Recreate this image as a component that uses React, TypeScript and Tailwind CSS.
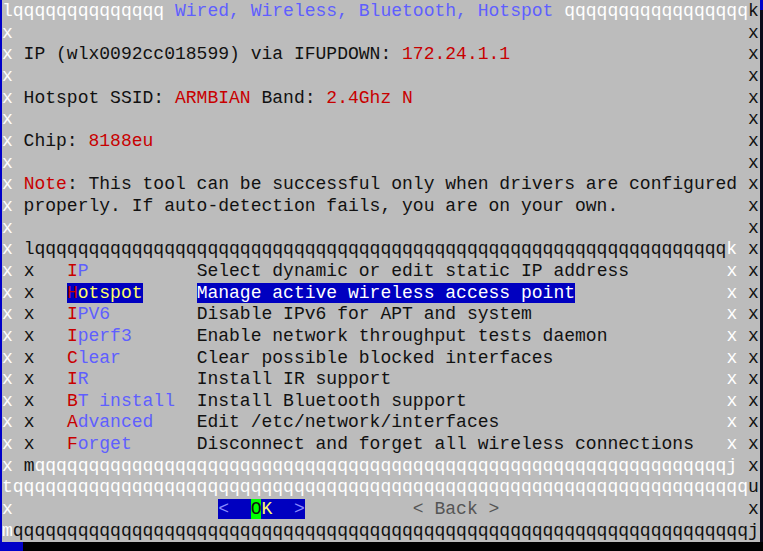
import React from "react";

const q = (n: number) => "q".repeat(n);
const sp = (n: number) => " ".repeat(n);

type Seg = [string, string?];

const colorOf: Record<string, string> = {
    w: "text-white",
    k: "text-[#111111]",
    r: "text-[#c80000]",
    b: "text-[#5f5fff]",
};

const Segs = ({ segs }: { segs: Seg[] }) => (
    <>
        {segs.map(([t, c], i) => (
            <span key={i} className={colorOf[c ?? "k"]}>
                {t}
            </span>
        ))}
    </>
);

// one line of the outer box: white x, 68 cols of content, dark x
const Line = ({ segs = [] }: { segs?: Seg[] }) => {
    const len = segs.reduce((n, [t]) => n + t.length, 0);
    return (
        <div>
            <span className="text-white">x</span>
            <Segs segs={segs} />
            {sp(68 - len)}
            <span className="text-[#111111]">x</span>
        </div>
    );
};

type Item = { tag: string; desc: string };

const items: Item[] = [
    { tag: "IP", desc: "Select dynamic or edit static IP address" },
    { tag: "Hotspot", desc: "Manage active wireless access point" },
    { tag: "IPV6", desc: "Disable IPv6 for APT and system" },
    { tag: "Iperf3", desc: "Enable network throughput tests daemon" },
    { tag: "Clear", desc: "Clear possible blocked interfaces" },
    { tag: "IR", desc: "Install IR support" },
    { tag: "BT install", desc: "Install Bluetooth support" },
    { tag: "Advanced", desc: "Edit /etc/network/interfaces" },
    { tag: "Forget", desc: "Disconnect and forget all wireless connections" },
];

const MenuRow = ({ item, active }: { item: Item; active: boolean }) => {
    const first = item.tag.slice(0, 1);
    const rest = item.tag.slice(1);
    return (
        <div>
            <span className="text-white">x</span>
            {" "}
            <span className="text-[#111111]">x</span>
            {sp(3)}
            {active ? (
                <span className="bg-[#0000c0]">
                    <span className="text-[#c80000]">{first}</span>
                    <span className="text-[#ffff66]">{rest}</span>
                </span>
            ) : (
                <>
                    <span className="text-[#c80000]">{first}</span>
                    <span className="text-[#5f5fff]">{rest}</span>
                </>
            )}
            {sp(12 - item.tag.length)}
            {active ? (
                <span className="bg-[#0000c0] text-white">{item.desc}</span>
            ) : (
                <span className="text-[#111111]">{item.desc}</span>
            )}
            {sp(49 - item.desc.length)}
            <span className="text-white">x</span>
            {" "}
            <span className="text-[#111111]">x</span>
        </div>
    );
};

const App = () => {
    const title = "Wired, Wireless, Bluetooth, Hotspot";
    return (
        <div className="w-[763px] h-[551px] bg-black flex flex-col overflow-hidden">
            <div className="flex h-[542px]">
                <div className="w-[2px] bg-[#0000c8]" />
                <div
                    className="w-[758px] pt-[1px] bg-[#bcbcbc] text-[#111111] text-[18.03px] leading-[21.65px] whitespace-pre overflow-hidden"
                    style={{ fontFamily: '"Liberation Mono", "DejaVu Sans Mono", monospace' }}
                >
                    <div>
                        <Segs segs={[["l" + q(14) + " ", "w"], [title, "b"], [" " + q(17), "w"], ["k", "k"]]} />
                    </div>
                    <Line />
                    <Line segs={[[" IP (wlx0092cc018599) via IFUPDOWN: "], ["172.24.1.1", "r"]]} />
                    <Line />
                    <Line segs={[[" Hotspot SSID: "], ["ARMBIAN", "r"], [" Band: "], ["2.4Ghz N", "r"]]} />
                    <Line />
                    <Line segs={[[" Chip: "], ["8188eu", "r"]]} />
                    <Line />
                    <Line
                        segs={[
                            [" "],
                            ["Note", "r"],
                            [": This tool can be successful only when drivers are configured"],
                        ]}
                    />
                    <Line segs={[[" properly. If auto-detection fails, you are on your own."]]} />
                    <Line />
                    <Line segs={[[" "], ["l" + q(64), "k"], ["k", "w"], [" "]]} />
                    {items.map((item) => (
                        <MenuRow key={item.tag} item={item} active={item.tag === "Hotspot"} />
                    ))}
                    <Line segs={[[" "], ["m", "k"], [q(64) + "j", "w"], [" "]]} />
                    <div>
                        <Segs segs={[["t" + q(68), "w"], ["u", "k"]]} />
                    </div>
                    <div>
                        <span className="text-white">x</span>
                        {sp(19)}
                        <span className="bg-[#0000c0]">
                            <span className="text-[#8a8aff]">{"<  "}</span>
                            <span className="bg-[#00ff00] text-[#111111]">O</span>
                            <span className="text-[#ffff66]">K</span>
                            <span className="text-[#8a8aff]">{"  >"}</span>
                        </span>
                        {sp(10)}
                        <span className="text-[#555555]">{"< Back >"}</span>
                        {sp(23)}
                        <span className="text-[#111111]">x</span>
                    </div>
                    <div>
                        <Segs segs={[["m", "w"], [q(68) + "j", "k"]]} />
                    </div>
                </div>
                <div className="flex-1 flex flex-col">
                    <div className="h-[10px] bg-[#0000c8]" />
                    <div className="flex-1 bg-[#0b0b1a]" />
                </div>
            </div>
            <div className="w-[23px] h-[9px] bg-[#0000c8]" />
        </div>
    );
};

export default App;
